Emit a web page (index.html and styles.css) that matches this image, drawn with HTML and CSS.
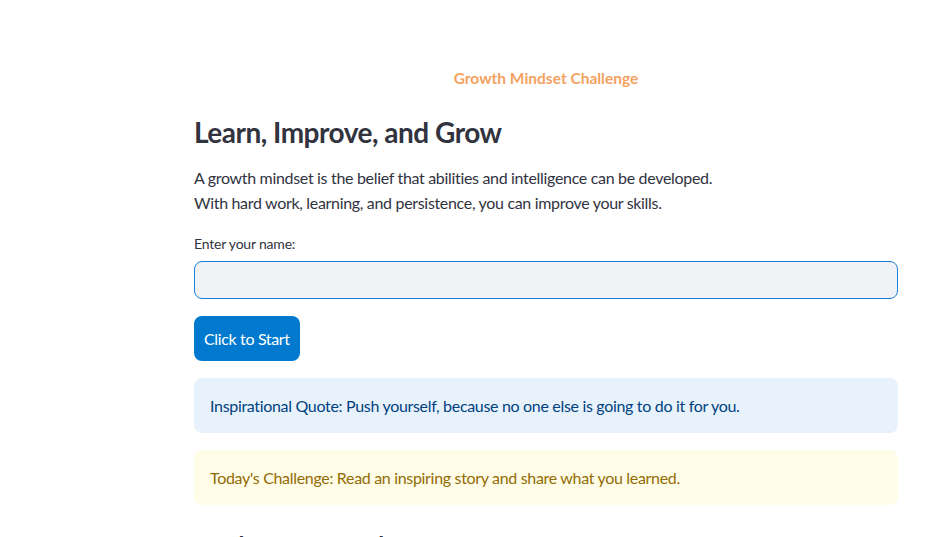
FILE: index.html
```html
<!DOCTYPE html>
<html lang="en">
<head>
<meta charset="utf-8">
<title>Growth Mindset Challenge</title>
<link rel="stylesheet" href="styles.css">
</head>
<body>
<main class="page">
  <p class="app-title">Growth Mindset Challenge</p>
  <h2 class="headline">Learn, Improve, and Grow</h2>
  <p class="intro">A growth mindset is the belief that abilities and intelligence can be developed.<br>With hard work, learning, and persistence, you can improve your skills.</p>
  <label class="field-label" for="name">Enter your name:</label>
  <input class="text-input" id="name" type="text">
  <button class="start-btn" type="button">Click to Start</button>
  <div class="alert alert-info">Inspirational Quote: Push yourself, because no one else is going to do it for you.</div>
  <div class="alert alert-warning">Today's Challenge: Read an inspiring story and share what you learned.</div>
  <h3 class="subhead">Track Your Growth Progress</h3>
</main>
</body>
</html>
```
FILE: styles.css
```css
html, body {
  margin: 0;
  padding: 0;
  background: #ffffff;
  overflow: hidden;
}
body {
  font-family: Lato, "Noto Sans", sans-serif;
  color: #31333f;
}
.page {
  width: 704px;
  margin-left: 194px;
  padding-top: 68px;
  display: flex;
  flex-direction: column;
  align-items: flex-start;
}
.app-title {
  align-self: stretch;
  text-align: center;
  margin: 0;
  font-size: 15.5px;
  font-weight: 700;
  line-height: 20px;
  color: #f4a261;
}
.headline {
  margin: 26px 0 0 0;
  font-size: 28px;
  font-weight: 700;
  line-height: 36px;
  letter-spacing: -0.5px;
  color: #31333f;
}
.intro {
  margin: 15px 0 0 0;
  font-size: 16px;
  line-height: 25px;
  letter-spacing: -0.32px;
}
.field-label {
  margin-top: 19px;
  font-size: 14px;
  line-height: 20px;
  letter-spacing: -0.2px;
}
.text-input {
  align-self: stretch;
  box-sizing: border-box;
  margin-top: 7px;
  height: 38px;
  border: 1px solid #1a7fd9;
  border-radius: 8px;
  background: #f0f2f6;
  outline: none;
  font: inherit;
}
.start-btn {
  margin-top: 17px;
  height: 45px;
  padding: 0 10px;
  border: none;
  border-radius: 8px;
  background: #0079ce;
  color: #ffffff;
  font-family: inherit;
  font-size: 16px;
  letter-spacing: -0.35px;
}
.alert {
  align-self: stretch;
  margin-top: 17px;
  padding: 0 16px;
  height: 55px;
  display: flex;
  align-items: center;
  border-radius: 8px;
  font-size: 16px;
  letter-spacing: -0.32px;
}
.alert-info {
  background: #e8f2fc;
  color: #004280;
}
.alert-warning {
  background: #fffce7;
  color: #926c05;
}
.subhead {
  margin: 25px 0 0 0;
  font-size: 24px;
  font-weight: 700;
  line-height: 32px;
  color: #31333f;
}
```
